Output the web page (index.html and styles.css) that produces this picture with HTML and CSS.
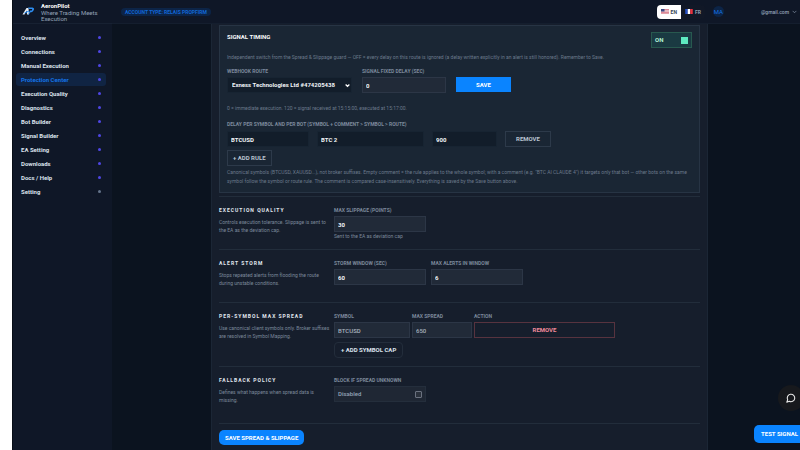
FILE: index.html
```html
<!DOCTYPE html>
<html lang="en">
<head>
    <meta charset="utf-8">
    <meta name="viewport" content="width=device-width, initial-scale=1">
    <title>AeronPilot - Protection Center</title>
    <link rel="stylesheet" href="styles.css">
</head>
<body>
    <div class="app">
        <aside class="sidebar">
            <div class="brand">
                <svg class="brand-logo" viewBox="0 0 26 18" aria-hidden="true">
                    <path d="M1 16 L9 3 L13 3 L14 16 L10 16 L9.5 8 L5 16 Z" fill="#e6edf5"/>
                    <path d="M5 13 L14 9" stroke="#1e8fff" stroke-width="2"/>
                    <path d="M12 2 H21 Q26 3 23 8 Q21 12 16 12 L14 16 L12 16 L16 8 H19 Q21 7 20 5 H14 Z" fill="#2d8df0"/>
                </svg>
                <div class="brand-text">
                    <strong>AeronPilot</strong>
                    <span>Where Trading Meets Execution</span>
                </div>
            </div>
            <nav class="nav">
                <a href="#">Overview</a>
                <a href="#">Connections</a>
                <a href="#">Manual Execution</a>
                <a href="#" class="active">Protection Center</a>
                <a href="#">Execution Quality</a>
                <a href="#">Diagnostics</a>
                <a href="#">Bot Builder</a>
                <a href="#">Signal Builder</a>
                <a href="#">EA Setting</a>
                <a href="#">Downloads</a>
                <a href="#">Docs / Help</a>
                <a href="#" class="muted">Setting</a>
            </nav>
        </aside>

        <div class="main">
            <header class="topbar">
                <span class="account">ACCOUNT TYPE: RELAIS PROPFIRM</span>
                <div class="langs">
                    <button class="lang on">
                        <svg class="flag" viewBox="0 0 16 10" aria-hidden="true">
                            <path d="M0 0H16V10H0Z" fill="#f4e9ec"/>
                            <path d="M0 1H16M0 4H16M0 7H16M0 9.5H16" stroke="#d0566b" stroke-width="1.3"/>
                            <path d="M0 0H7V5H0Z" fill="#3d4a86"/>
                        </svg>
                        EN
                    </button>
                    <button class="lang">
                        <svg class="flag" viewBox="0 0 15 10" aria-hidden="true">
                            <path d="M0 0H5V10H0Z" fill="#2450c8"/>
                            <path d="M5 0H10V10H5Z" fill="#fff"/>
                            <path d="M10 0H15V10H10Z" fill="#e8323f"/>
                        </svg>
                        FR
                    </button>
                </div>
                <span class="avatar">MA</span>
                <button class="user">
                    @gmail.com
                    <svg class="chev" viewBox="0 0 8 8" aria-hidden="true"><path d="M1 3L4 6L7 3" fill="none" stroke="currentColor"/></svg>
                </button>
            </header>

            <main class="panel">
                <section class="card">
                    <div class="card-head">
                        <h2>SIGNAL TIMING</h2>
                        <button class="toggle">ON <i></i></button>
                    </div>
                    <p class="note">Independent switch from the Spread &amp; Slippage guard — OFF = every delay on this route is ignored (a delay written explicitly in an alert is still honored). Remember to Save.</p>
                    <div class="timing">
                        <div class="field">
                            <label for="route">WEBHOOK ROUTE</label>
                            <div class="select">
                                <select id="route" class="dark"><option>Exness Technologies Ltd #474205438</option></select>
                                <svg viewBox="0 0 8 8" aria-hidden="true"><path d="M1 2.5L4 5.5L7 2.5" fill="none" stroke="#fff" stroke-width="2"/></svg>
                            </div>
                        </div>
                        <div class="field">
                            <label for="delay">SIGNAL FIXED DELAY (SEC)</label>
                            <input id="delay" type="text" value="0">
                        </div>
                        <button class="save">SAVE</button>
                    </div>
                    <p class="note hint">0 = immediate execution. 120 = signal received at 15:15:00, executed at 15:17:00.</p>
                    <h3>DELAY PER SYMBOL AND PER BOT (SYMBOL + COMMENT &gt; SYMBOL &gt; ROUTE)</h3>
                    <div class="rule">
                        <input class="dark" type="text" value="BTCUSD" aria-label="Symbol">
                        <input class="dark" type="text" value="BTC 2" aria-label="Comment">
                        <input class="dark" type="text" value="900" aria-label="Delay">
                        <button class="outline">REMOVE</button>
                    </div>
                    <button class="outline add-rule">+ ADD RULE</button>
                    <p class="note">Canonical symbols (BTCUSD, XAUUSD...), not broker suffixes. Empty comment = the rule applies to the whole symbol; with a comment (e.g. "BTC AI CLAUDE 4") it targets only that bot — other bots on the same symbol follow the symbol or route rule. The comment is compared case-insensitively. Everything is saved by the Save button above.</p>
                </section>

                <section class="row first">
                    <div class="about">
                        <h4>EXECUTION QUALITY</h4>
                        <p>Controls execution tolerance. Slippage is sent to the EA as the deviation cap.</p>
                    </div>
                    <div class="fields">
                        <div class="field">
                            <label for="slip">MAX SLIPPAGE (POINTS)</label>
                            <input id="slip" type="text" value="30">
                            <small>Sent to the EA as deviation cap</small>
                        </div>
                    </div>
                </section>

                <section class="row">
                    <div class="about">
                        <h4>ALERT STORM</h4>
                        <p>Stops repeated alerts from flooding the route during unstable conditions.</p>
                    </div>
                    <div class="fields">
                        <div class="field">
                            <label for="storm">STORM WINDOW (SEC)</label>
                            <input id="storm" type="text" value="60">
                        </div>
                        <div class="field">
                            <label for="alerts">MAX ALERTS IN WINDOW</label>
                            <input id="alerts" type="text" value="6">
                        </div>
                    </div>
                </section>

                <section class="row tall">
                    <div class="about">
                        <h4>PER-SYMBOL MAX SPREAD</h4>
                        <p>Use canonical client symbols only. Broker suffixes are resolved in Symbol Mapping.</p>
                    </div>
                    <div class="spread">
                        <div class="caps">
                            <div class="field">
                                <label for="cap-symbol">SYMBOL</label>
                                <input id="cap-symbol" class="soft" type="text" value="BTCUSD">
                            </div>
                            <div class="field">
                                <label for="cap-spread">MAX SPREAD</label>
                                <input id="cap-spread" class="soft" type="text" value="650">
                            </div>
                            <div class="field">
                                <span class="label">ACTION</span>
                                <button class="danger">REMOVE</button>
                            </div>
                        </div>
                        <button class="add-cap">+ ADD SYMBOL CAP</button>
                    </div>
                </section>

                <section class="row last">
                    <div class="about">
                        <h4>FALLBACK POLICY</h4>
                        <p>Defines what happens when spread data is missing.</p>
                    </div>
                    <div class="fields">
                        <div class="field">
                            <span class="label">BLOCK IF SPREAD UNKNOWN</span>
                            <label class="check">Disabled <input type="checkbox"></label>
                        </div>
                    </div>
                </section>

                <div class="foot">
                    <button class="save-all">SAVE SPREAD &amp; SLIPPAGE</button>
                </div>
            </main>
        </div>
    </div>

    <button class="chat" aria-label="Open chat">
        <svg viewBox="0 0 24 24" aria-hidden="true"><path d="M7.9 20A9 9 0 1 0 4 16.1L2 22Z" fill="none" stroke="#e8e8e8" stroke-width="2.6" stroke-linejoin="round"/></svg>
    </button>
    <button class="test">TEST SIGNAL</button>
</body>
</html>
```
FILE: styles.css
```css
* {
    box-sizing: border-box;
}
body {
    margin: 0;
    padding-left: 12px;
    background: #fff;
    color: #e2e8f0;
    font-family: Roboto, sans-serif;
    font-size: 6px;
    line-height: 8px;
}
h2, h3, h4, p {
    margin: 0;
}
button, input, select {
    font: inherit;
    color: inherit;
    margin: 0;
    border-radius: 0;
}
button {
    padding: 0;
    font-weight: 700;
    background: none;
    border: 0;
    white-space: nowrap;
}
.app {
    display: flex;
    min-height: 100vh;
    background: #0b131f;
}

/* sidebar */
.sidebar {
    width: 100px;
    flex: none;
    background: #0f1727;
    border-left: 1px solid #070d16;
}
.brand {
    display: flex;
    gap: 6px;
    height: 24px;
    padding: 2px 12px 0 9px;
    border-bottom: 1px solid #172132;
}
.brand-logo {
    width: 13px;
    height: 10px;
    margin-top: 4px;
    flex: none;
}
.brand-text strong {
    display: block;
    font-weight: 700;
    color: #fff;
}
.brand-text span {
    display: block;
    line-height: 6px;
    color: #94a3b8;
}
.nav {
    display: flex;
    flex-direction: column;
    gap: 1px;
    padding: 7px 6px 0 3px;
}
.nav a {
    display: flex;
    align-items: center;
    justify-content: space-between;
    height: 13px;
    padding: 0 5px;
    border-radius: 3px;
    color: #dbe2ec;
    font-weight: 700;
    text-decoration: none;
}
.nav a::after {
    content: "";
    width: 3px;
    height: 3px;
    border-radius: 50%;
    background: #4f46e5;
}
.nav a.muted::after {
    background: #64748b;
}
.nav a.active {
    background: #102443;
    color: #1473e6;
}

/* top bar */
.main {
    flex: 1;
    min-width: 0;
    display: flex;
    flex-direction: column;
}
.topbar {
    display: flex;
    align-items: center;
    height: 24px;
    padding: 0 3px 0 9px;
    background: #0f1727;
    border-bottom: 1px solid #141e2e;
}
.account {
    padding: 0 4px;
    border-radius: 4px;
    background: #0c2447;
    color: #1268d8;
    font-size: 5px;
    font-weight: 700;
}
.langs {
    display: flex;
    margin-left: auto;
    border-radius: 4px;
    overflow: hidden;
    background: #111827;
}
.lang {
    display: flex;
    align-items: center;
    gap: 2px;
    height: 14px;
    padding: 0 4px;
    font-size: 5px;
    color: #94a3b8;
}
.lang.on {
    background: #fff;
    color: #334155;
}
.flag {
    width: 8px;
    height: 5px;
}
.avatar {
    width: 11px;
    margin-left: 8px;
    border-radius: 50%;
    background: #0c2447;
    color: #1473e6;
    line-height: 11px;
    text-align: center;
}
.user {
    display: flex;
    align-items: center;
    gap: 3px;
    margin-left: 37px;
    font-size: 5px;
    font-weight: 500;
    color: #94a3b8;
}
.chev {
    width: 5px;
    height: 5px;
}

/* content */
.panel {
    flex: 1;
    margin: 0 92px 0 99px;
    padding: 1px 7px 6px;
    background: #161e2c;
    border: solid #1b2635;
    border-width: 0 1px;
}
.card {
    padding: 6px 7px;
    background: #1a2634;
    border: 1px solid #273444;
}
.card-head {
    display: flex;
    justify-content: space-between;
    align-items: flex-start;
    margin-bottom: 5px;
}
h2 {
    font-size: 6px;
    line-height: 9px;
    color: #f8fafc;
}
.toggle {
    display: flex;
    align-items: center;
    justify-content: space-between;
    width: 41px;
    height: 16px;
    padding: 0 3px;
    background: #1a3a42;
    border: 1px solid #28594f;
    color: #b5f5d8;
}
.toggle i {
    width: 7px;
    height: 7px;
    background: #5eeac0;
}
.note {
    font-size: 5px;
    line-height: 9px;
    color: #6b798b;
}
.field {
    min-width: 0;
}
label, .label, h3 {
    display: block;
    font-size: 5px;
    line-height: 8px;
    font-weight: 700;
    color: #7c899b;
}
input[type=text], select {
    display: block;
    width: 100%;
    height: 16px;
    padding: 0 3px;
    border: 1px solid #2c3646;
    background: #212a38;
    color: #f1f5f9;
    font-weight: 700;
    outline: 0;
}
input[type=text].soft {
    color: #a8b1be;
    font-weight: 500;
}
input[type=text].dark, select.dark {
    background: #121d2a;
    border-color: #172432;
}
select.dark {
    appearance: none;
    padding: 0 4px;
}
.select {
    position: relative;
}
.select svg {
    position: absolute;
    right: 2px;
    top: 6px;
    width: 5px;
    height: 5px;
    pointer-events: none;
}
.timing {
    display: grid;
    grid-template-columns: 125px 84px 55px;
    column-gap: 10px;
    align-items: end;
    margin-top: 5px;
}
.timing input, .timing select {
    margin-top: 2px;
}
.save {
    height: 15px;
    margin-bottom: 1px;
    background: #0a84ff;
    color: #fff;
}
.hint {
    margin-top: 11px;
}
h3 {
    margin-top: 7px;
}
.rule {
    display: grid;
    grid-template-columns: 82px 107px 65px 46px;
    column-gap: 8px;
    margin-top: 3px;
}
.outline {
    height: 16px;
    border: 1px solid #2d3a4a;
    color: #b9c3d0;
}
.add-rule {
    display: block;
    margin: 3px 0 2px;
    padding: 0 5px;
}
.row {
    display: grid;
    grid-template-columns: 113px 1fr;
    column-gap: 2px;
    min-height: 53px;
    padding-top: 9px;
    border-top: 1px solid #222d3b;
}
.row.first {
    margin-top: 3px;
}
.row.tall {
    min-height: 64px;
}
.row.last {
    min-height: 57px;
}
h4 {
    font-size: 5px;
    line-height: 8px;
    letter-spacing: 1px;
    color: #e2e8f0;
}
.about p {
    margin-top: 4px;
    font-size: 5px;
    line-height: 8px;
    color: #7c899b;
}
.fields {
    display: grid;
    grid-template-columns: 92px 92px;
    column-gap: 5px;
    align-items: start;
}
.row input[type=text] {
    margin-top: 2px;
}
small {
    display: block;
    font-size: 5px;
    color: #7c899b;
}
.caps {
    display: grid;
    grid-template-columns: 76px 60px 141px;
    column-gap: 2px;
}
.danger {
    display: block;
    width: 100%;
    height: 16px;
    margin-top: 2px;
    border: 1px solid #57333f;
    color: #f08a9b;
}
.add-cap {
    height: 16px;
    margin-top: 4px;
    padding: 0 6px;
    border: 1px solid #232d3b;
    border-radius: 4px;
    color: #dbe2ec;
}
.check {
    display: flex;
    align-items: center;
    justify-content: space-between;
    height: 16px;
    margin-top: 2px;
    padding: 0 3px;
    border: 1px solid #242e3c;
    background: #1f2734;
    font-size: 6px;
    font-weight: 500;
    color: #94a3b8;
}
.check input {
    appearance: none;
    width: 7px;
    height: 7px;
    border: 1px solid #6b7280;
    border-radius: 1px;
    background: #2b323d;
}
.foot {
    padding-top: 6px;
    border-top: 1px solid #222d3b;
}
.save-all {
    height: 15px;
    padding: 0 6px;
    border-radius: 5px;
    background: #0a84ff;
    color: #fff;
}

/* floating buttons */
.chat {
    position: fixed;
    right: -4px;
    bottom: 39px;
    width: 26px;
    height: 26px;
    border-radius: 50%;
    background: #17191d;
}
.chat svg {
    width: 10px;
    height: 10px;
    display: block;
    margin: 0 auto;
}
.test {
    position: fixed;
    right: -6px;
    bottom: 7px;
    height: 18px;
    padding: 0 8px 0 7px;
    border-radius: 5px;
    background: #0a84ff;
    color: #fff;
}
```
